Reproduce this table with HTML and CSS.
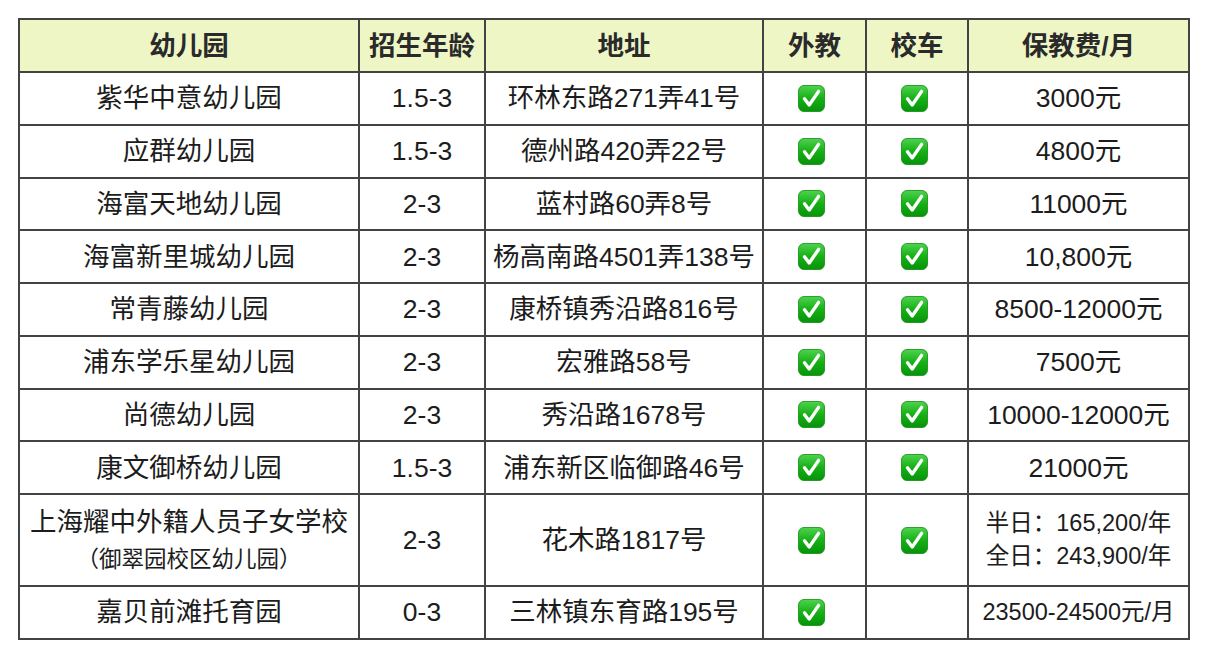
FILE: index.html
```html
<!DOCTYPE html>
<html lang="zh-CN">
<head>
<meta charset="utf-8">
<title>幼儿园</title>
<link rel="stylesheet" href="styles.css">
</head>
<body>
<svg class="defs" width="0" height="0" aria-hidden="true">
  <defs>
    <linearGradient id="g" x1="0" y1="0" x2="0" y2="1">
      <stop offset="0" stop-color="#4fd34f"/>
      <stop offset="0.5" stop-color="#16b016"/>
      <stop offset="1" stop-color="#07930a"/>
    </linearGradient>
    <symbol id="chk" viewBox="0 0 27 27">
      <rect x="0.5" y="0.5" width="26" height="26" rx="5.5" fill="url(#g)" stroke="#0c8e0c" stroke-width="0.8"/>
      <path d="M6.5 13.8 L11.2 20 L20.6 6.4" fill="none" stroke="#fff" stroke-width="3.4" stroke-linecap="round" stroke-linejoin="round"/>
    </symbol>
  </defs>
</svg>
<table class="tbl">
  <colgroup>
    <col class="c1"><col class="c2"><col class="c3"><col class="c4"><col class="c5"><col class="c6">
  </colgroup>
  <thead>
    <tr class="head"><th>幼儿园</th><th>招生年龄</th><th>地址</th><th>外教</th><th>校车</th><th>保教费/月</th></tr>
  </thead>
  <tbody>
    <tr><td>紫华中意幼儿园</td><td>1.5-3</td><td>环林东路271弄41号</td><td><svg class="ck"><use href="#chk"/></svg></td><td><svg class="ck"><use href="#chk"/></svg></td><td>3000元</td></tr>
    <tr><td>应群幼儿园</td><td>1.5-3</td><td>德州路420弄22号</td><td><svg class="ck"><use href="#chk"/></svg></td><td><svg class="ck"><use href="#chk"/></svg></td><td>4800元</td></tr>
    <tr><td>海富天地幼儿园</td><td>2-3</td><td>蓝村路60弄8号</td><td><svg class="ck"><use href="#chk"/></svg></td><td><svg class="ck"><use href="#chk"/></svg></td><td>11000元</td></tr>
    <tr><td>海富新里城幼儿园</td><td>2-3</td><td>杨高南路4501弄138号</td><td><svg class="ck"><use href="#chk"/></svg></td><td><svg class="ck"><use href="#chk"/></svg></td><td>10,800元</td></tr>
    <tr><td>常青藤幼儿园</td><td>2-3</td><td>康桥镇秀沿路816号</td><td><svg class="ck"><use href="#chk"/></svg></td><td><svg class="ck"><use href="#chk"/></svg></td><td>8500-12000元</td></tr>
    <tr><td>浦东学乐星幼儿园</td><td>2-3</td><td>宏雅路58号</td><td><svg class="ck"><use href="#chk"/></svg></td><td><svg class="ck"><use href="#chk"/></svg></td><td>7500元</td></tr>
    <tr><td>尚德幼儿园</td><td>2-3</td><td>秀沿路1678号</td><td><svg class="ck"><use href="#chk"/></svg></td><td><svg class="ck"><use href="#chk"/></svg></td><td>10000-12000元</td></tr>
    <tr><td>康文御桥幼儿园</td><td>1.5-3</td><td>浦东新区临御路46号</td><td><svg class="ck"><use href="#chk"/></svg></td><td><svg class="ck"><use href="#chk"/></svg></td><td>21000元</td></tr>
    <tr class="tall"><td><div class="nm">上海耀中外籍人员子女学校</div><div class="sub">（御翠园校区幼儿园）</div></td><td>2-3</td><td>花木路1817号</td><td><svg class="ck"><use href="#chk"/></svg></td><td><svg class="ck"><use href="#chk"/></svg></td><td class="small"><div>半日：165,200/年</div><div>全日：243,900/年</div></td></tr>
    <tr><td>嘉贝前滩托育园</td><td>0-3</td><td>三林镇东育路195号</td><td><svg class="ck"><use href="#chk"/></svg></td><td></td><td class="small">23500-24500元/月</td></tr>
  </tbody>
</table>
</body>
</html>
```
FILE: styles.css
```css
html, body {
  margin: 0;
  padding: 0;
  background: #ffffff;
}
body {
  padding: 18px 0 0 18px;
  font-family: "Liberation Sans", "Noto Sans CJK SC", sans-serif;
  color: #1c1c1c;
}
.defs {
  position: absolute;
  width: 0;
  height: 0;
}
.tbl {
  border-collapse: collapse;
  table-layout: fixed;
  width: 1170px;
  border: 2px solid #434343;
}
.c1 { width: 340px; }
.c2 { width: 126px; }
.c3 { width: 278px; }
.c4 { width: 103px; }
.c5 { width: 102px; }
.c6 { width: 221px; }
.tbl th, .tbl td {
  border: 2px solid #434343;
  text-align: center;
  vertical-align: middle;
  padding: 0;
  font-size: 26.5px;
  line-height: 30px;
  white-space: nowrap;
}
.tbl th {
  background: #eef6c6;
  font-weight: bold;
  color: #2a2a2a;
  height: 51px;
}
.tbl td {
  height: 50.75px;
}
.tbl tr.tall td {
  height: 90px;
}
.nm {
  line-height: 34px;
}
.sub {
  font-size: 22.5px;
  line-height: 30px;
  margin-top: 6px;
}
.tbl td.small {
  font-size: 23.5px;
  line-height: 33px;
}
.ck {
  width: 27px;
  height: 27px;
  display: block;
  margin: 0 auto;
  position: relative;
  left: -3px;
}
```
